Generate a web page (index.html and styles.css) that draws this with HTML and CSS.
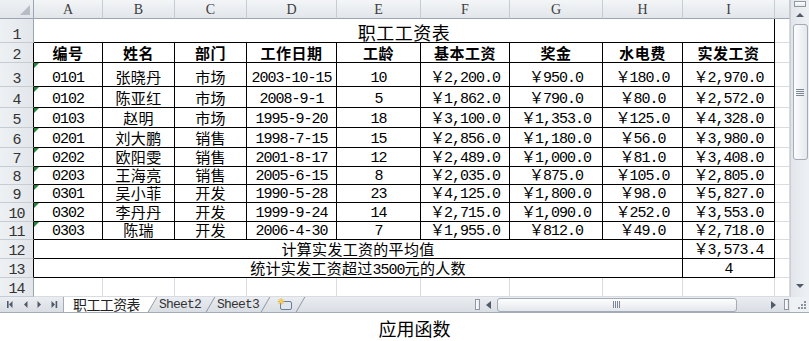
FILE: index.html
```html
<!DOCTYPE html>
<html lang="zh">
<head>
<meta charset="utf-8">
<title>应用函数</title>
<link rel="stylesheet" href="styles.css">
</head>
<body>
<div class="excel">
  <div class="main">
    <div class="sheet">
      <div class="corner"></div>
      <div class="ch">A</div><div class="ch">B</div><div class="ch">C</div><div class="ch">D</div><div class="ch">E</div><div class="ch">F</div><div class="ch">G</div><div class="ch">H</div><div class="ch">I</div><div class="ch"></div>

      <div class="rh">1</div><div class="c b zh title span9">职工工资表</div><div class="c"></div>

      <div class="rh edge">2</div>
      <div class="c b zh hd">编号</div><div class="c b zh hd">姓名</div><div class="c b zh hd">部门</div><div class="c b zh hd">工作日期</div><div class="c b zh hd">工龄</div><div class="c b zh hd">基本工资</div><div class="c b zh hd">奖金</div><div class="c b zh hd">水电费</div><div class="c b zh hd">实发工资</div><div class="c"></div>

      <div class="rh edge">3</div>
      <div class="c b t">0101</div><div class="c b zh">张晓丹</div><div class="c b zh">市场</div><div class="c b">2003-10-15</div><div class="c b">10</div><div class="c b">￥2,200.0</div><div class="c b">￥950.0</div><div class="c b">￥180.0</div><div class="c b">￥2,970.0</div><div class="c"></div>

      <div class="rh edge">4</div>
      <div class="c b t">0102</div><div class="c b zh">陈亚红</div><div class="c b zh">市场</div><div class="c b">2008-9-1</div><div class="c b">5</div><div class="c b">￥1,862.0</div><div class="c b">￥790.0</div><div class="c b">￥80.0</div><div class="c b">￥2,572.0</div><div class="c"></div>

      <div class="rh edge">5</div>
      <div class="c b t">0103</div><div class="c b zh">赵明</div><div class="c b zh">市场</div><div class="c b">1995-9-20</div><div class="c b">18</div><div class="c b">￥3,100.0</div><div class="c b">￥1,353.0</div><div class="c b">￥125.0</div><div class="c b">￥4,328.0</div><div class="c"></div>

      <div class="rh edge">6</div>
      <div class="c b t">0201</div><div class="c b zh">刘大鹏</div><div class="c b zh">销售</div><div class="c b">1998-7-15</div><div class="c b">15</div><div class="c b">￥2,856.0</div><div class="c b">￥1,180.0</div><div class="c b">￥56.0</div><div class="c b">￥3,980.0</div><div class="c"></div>

      <div class="rh edge">7</div>
      <div class="c b t">0202</div><div class="c b zh">欧阳雯</div><div class="c b zh">销售</div><div class="c b">2001-8-17</div><div class="c b">12</div><div class="c b">￥2,489.0</div><div class="c b">￥1,000.0</div><div class="c b">￥81.0</div><div class="c b">￥3,408.0</div><div class="c"></div>

      <div class="rh edge">8</div>
      <div class="c b t">0203</div><div class="c b zh">王海亮</div><div class="c b zh">销售</div><div class="c b">2005-6-15</div><div class="c b">8</div><div class="c b">￥2,035.0</div><div class="c b">￥875.0</div><div class="c b">￥105.0</div><div class="c b">￥2,805.0</div><div class="c"></div>

      <div class="rh edge">9</div>
      <div class="c b t">0301</div><div class="c b zh">吴小菲</div><div class="c b zh">开发</div><div class="c b">1990-5-28</div><div class="c b">23</div><div class="c b">￥4,125.0</div><div class="c b">￥1,800.0</div><div class="c b">￥98.0</div><div class="c b">￥5,827.0</div><div class="c"></div>

      <div class="rh edge">10</div>
      <div class="c b t">0302</div><div class="c b zh">李丹丹</div><div class="c b zh">开发</div><div class="c b">1999-9-24</div><div class="c b">14</div><div class="c b">￥2,715.0</div><div class="c b">￥1,090.0</div><div class="c b">￥252.0</div><div class="c b">￥3,553.0</div><div class="c"></div>

      <div class="rh edge">11</div>
      <div class="c b t">0303</div><div class="c b zh">陈瑞</div><div class="c b zh">开发</div><div class="c b">2006-4-30</div><div class="c b">7</div><div class="c b">￥1,955.0</div><div class="c b">￥812.0</div><div class="c b">￥49.0</div><div class="c b">￥2,718.0</div><div class="c"></div>

      <div class="rh edge">12</div>
      <div class="c b zh span8">计算实发工资的平均值</div><div class="c b">￥3,573.4</div><div class="c"></div>

      <div class="rh edge">13</div>
      <div class="c b zh span8"><span class="mix">统计实发工资超过<span class="num">3500</span>元的人数</span></div><div class="c b">4</div><div class="c"></div>

      <div class="rh">14</div>
      <div class="c"></div><div class="c"></div><div class="c"></div><div class="c"></div><div class="c"></div><div class="c"></div><div class="c"></div><div class="c"></div><div class="c"></div><div class="c"></div>
    </div>

    <div class="vscroll">
      <div class="vsplit"></div>
      <div class="varrow"><span class="tri-up"></span></div>
      <div class="vthumb"><span class="vgrip"></span></div>
      <div class="vtrack"></div>
      <div class="varrow"><span class="tri-down"></span></div>
    </div>
  </div>

  <div class="bar">
    <div class="tabsec">
      <div class="nav">
        <svg width="63" height="15" viewBox="0 0 63 15">
          <g fill="#4f5b6b">
            <rect x="7" y="4" width="1.6" height="7"/>
            <polygon points="12.5,4 12.5,11 9,7.5"/>
            <polygon points="27.5,4 27.5,11 24,7.5"/>
            <polygon points="37.5,4 37.5,11 41,7.5"/>
            <polygon points="51.5,4 51.5,11 55,7.5"/>
            <rect x="55.6" y="4" width="1.6" height="7"/>
          </g>
        </svg>
      </div>
      <div class="tab active">职工工资表</div>
      <div class="tab s2">Sheet2</div>
      <div class="tab s3">Sheet3</div>
      <div class="tab snew">
        <svg width="16" height="13" viewBox="0 0 16 13">
          <rect x="3.5" y="3.5" width="11" height="8" rx="1.5" fill="#dfe6ee" stroke="#6b7d93"/>
          <path d="M4 0.3v6.4M0.8 3.5h6.4M1.7 1.2l4.6 4.6M6.3 1.2l-4.6 4.6" stroke="#e9a21a" stroke-width="0.9"/>
          <circle cx="4" cy="3.5" r="1.6" fill="#fbd34a"/>
        </svg>
      </div>
    </div>
    <div class="hscroll">
      <div class="hsplit"></div>
      <div class="harrow"><span class="tri-left"></span></div>
      <div class="hthumb"><span class="hgrip"></span></div>
      <div class="htrack"></div>
      <div class="harrow"><span class="tri-right"></span></div>
      <div class="hsplit"></div>
    </div>
    <div class="grip-corner">
      <svg width="19" height="15" viewBox="0 0 19 15">
        <g fill="#8a94a0">
          <rect x="14" y="4" width="2" height="2"/>
          <rect x="11" y="7" width="2" height="2"/>
          <rect x="14" y="7" width="2" height="2"/>
          <rect x="8" y="10" width="2" height="2"/>
          <rect x="11" y="10" width="2" height="2"/>
          <rect x="14" y="10" width="2" height="2"/>
        </g>
      </svg>
    </div>
  </div>
</div>
<div class="caption">应用函数</div>
</body>
</html>
```

FILE: styles.css
```css
* { box-sizing: border-box; }
html, body { margin: 0; padding: 0; overflow: hidden; background: #fff; }
body { width: 809px; height: 341px; font-family: "Noto Sans CJK SC", sans-serif; }

:root { --grid: #d8dce1; --hb: #9ca6b2; --hl: #c6ccd3; --sep: #8e97a3; }

.excel { width: 809px; }
.main { display: flex; height: 297px; }

.sheet {
  display: grid;
  width: 790px;
  grid-template-columns: 34px 69px 72px 72px 90px 84px 89px 93px 80px 92px 15px;
  grid-template-rows: 19px 24px 20px 24px 21px 20px 20px 19px 18px 18px 19px 18px 19px 19px 19px;
}

.corner {
  position: relative;
  background: linear-gradient(#eef1f4, #e1e5ea);
  border-right: 1px solid var(--hb);
  border-bottom: 1px solid var(--hb);
}
.corner::after {
  content: "";
  position: absolute;
  right: 3px;
  bottom: 3px;
  border-left: 10px solid transparent;
  border-bottom: 10px solid #b6bdc6;
}

.ch {
  background: linear-gradient(#f3f5f7, #e2e6ea);
  border-right: 1px solid var(--hl);
  border-bottom: 1px solid var(--hb);
  display: flex;
  align-items: center;
  justify-content: center;
  font: 14px/14px "Liberation Serif", serif;
  color: #3d3d3d;
  padding-top: 1px;
}

.rh {
  background: linear-gradient(90deg, #eef1f4, #e2e6ea);
  border-right: 1px solid var(--hb);
  border-bottom: 1px solid var(--hl);
  display: flex;
  align-items: flex-end;
  justify-content: center;
  font: 15px/13px "Liberation Mono", monospace;
  letter-spacing: -1px;
  color: #333;
}
.rh.edge { border-right-color: #000; }

.c {
  position: relative;
  border-right: 1px solid var(--grid);
  border-bottom: 1px solid var(--grid);
  display: flex;
  align-items: flex-end;
  justify-content: center;
  white-space: nowrap;
  font: 15px/14px "Liberation Mono", "Noto Sans CJK SC", monospace;
  letter-spacing: -1px;
  color: #000;
}
.c.b { border-right-color: #000; border-bottom-color: #000; }
.zh {
  font-family: "Noto Sans CJK SC", sans-serif;
  letter-spacing: 0.3px;
  line-height: 16px;
  padding-bottom: 1px;
}
.hd { font-weight: 700; letter-spacing: 0.5px; }
.title { font-size: 18px; line-height: 20px; padding-bottom: 0; letter-spacing: 0.5px; }
.mix { line-height: 16px; }
.num { font-family: "Liberation Mono", monospace; letter-spacing: -1px; line-height: 0; }
.span9 { grid-column: span 9; }
.span8 { grid-column: span 8; }
.t::before {
  content: "";
  position: absolute;
  left: 0;
  top: 0;
  border-top: 5px solid #23883a;
  border-right: 5px solid transparent;
}

/* vertical scrollbar */
.vscroll {
  width: 19px;
  height: 297px;
  background: linear-gradient(90deg, #e2e6eb, #eef1f4);
  border-left: 1px solid #c9ced5;
  display: flex;
  flex-direction: column;
  align-items: center;
  padding-bottom: 3px;
}
.vsplit {
  width: 12px;
  height: 6px;
  margin-top: 1px;
  border: 1px solid var(--sep);
  background: linear-gradient(#ffffff, #e4e8ec);
}
.varrow { height: 16px; width: 100%; display: flex; align-items: center; justify-content: center; }
.tri-up { border-left: 4px solid transparent; border-right: 4px solid transparent; border-bottom: 4px solid #4f5b6b; }
.tri-down { border-left: 4px solid transparent; border-right: 4px solid transparent; border-top: 4px solid #4f5b6b; }
.vthumb {
  width: 15px;
  height: 136px;
  margin-top: 1px;
  border: 1px solid #a2abb6;
  border-radius: 3px;
  background: linear-gradient(90deg, #fdfdfe, #e4e8ed);
  display: flex;
  align-items: center;
  justify-content: center;
}
.vgrip {
  width: 8px;
  height: 7px;
  background: repeating-linear-gradient(#7d8794 0 1px, transparent 1px 2px);
}
.vtrack { flex: 1; }

/* bottom bar */
.bar {
  display: flex;
  height: 16px;
  background: linear-gradient(#eaedf1, #d9dee4);
  border-bottom: 1px solid #a3abb5;
}
.tabsec { flex: 0 0 475px; display: flex; height: 15px; }
.nav { width: 64px; height: 15px; border-right: 1px solid #a3abb5; }
.nav svg { display: block; }
.tab {
  position: relative;
  height: 15px;
  display: flex;
  align-items: center;
  white-space: nowrap;
}
.tab::after {
  content: "";
  position: absolute;
  top: 0;
  bottom: 0;
  right: 0;
  width: 1px;
  background: var(--sep);
  transform: skewX(-30deg);
}
.tab.active {
  background: #fff;
  padding: 0 8px 0 9px;
  font: 14px/15px "Noto Sans CJK SC", sans-serif;
  letter-spacing: -0.6px;
  color: #222;
  z-index: 1;
}
.tab.active::after {
  right: -5px;
  width: 10px;
  background: #fff;
  border-right: 1px solid var(--sep);
}
.s2, .s3 {
  font: 13px/15px "Liberation Mono", monospace;
  letter-spacing: -0.8px;
  color: #333;
}
.s2 { padding: 0 10px 0 11px; }
.s3 { padding: 0 7px 0 6px; }
.snew { padding: 0 8px 0 11px; }
.snew svg { display: block; }

.hscroll {
  flex: 0 0 315px;
  display: flex;
  align-items: center;
  height: 15px;
}
.hsplit {
  width: 5px;
  height: 11px;
  border: 1px solid var(--sep);
  background: linear-gradient(90deg, #ffffff, #e4e8ec);
}
.harrow { width: 17px; height: 15px; display: flex; align-items: center; justify-content: center; }
.tri-left { border-top: 4px solid transparent; border-bottom: 4px solid transparent; border-right: 5px solid #4f5b6b; }
.tri-right { border-top: 4px solid transparent; border-bottom: 4px solid transparent; border-left: 5px solid #4f5b6b; }
.hthumb {
  width: 240px;
  height: 14px;
  border: 1px solid #a2abb6;
  border-radius: 3px;
  background: linear-gradient(#fdfdfe, #e3e7ec);
  display: flex;
  align-items: center;
  justify-content: center;
}
.hgrip {
  width: 8px;
  height: 7px;
  background: repeating-linear-gradient(90deg, #7d8794 0 1px, transparent 1px 2px);
}
.htrack { flex: 1; }
.hscroll .hsplit:last-child { margin-right: 1px; margin-left: 2px; }
.grip-corner { flex: 0 0 19px; height: 15px; background: #eef1f4; }
.grip-corner svg { display: block; }

.caption {
  height: 28px;
  padding: 2px 0 0 20px;
  text-align: center;
  font: 18px/26px "Noto Sans CJK SC", sans-serif;
  color: #000;
}
```
